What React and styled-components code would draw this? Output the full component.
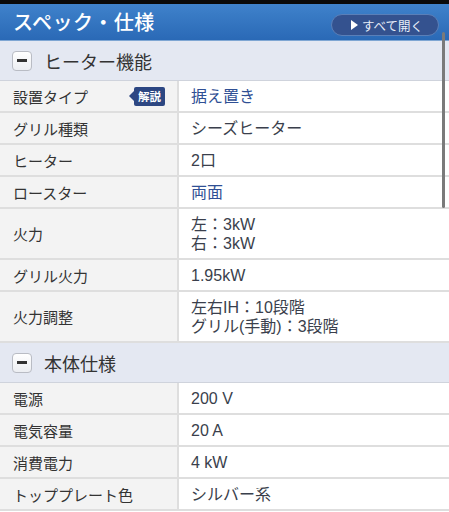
import styled, { createGlobalStyle } from 'styled-components';

const GlobalStyle = createGlobalStyle`
  html, body {
    margin: 0;
    padding: 0;
    background: #ffffff;
  }
  body {
    font-family: "Liberation Sans", "Noto Sans CJK JP", sans-serif;
    width: 449px;
    height: 512px;
    overflow: hidden;
  }
`;

const Page = styled.div`
  position: relative;
  width: 449px;
  height: 512px;
  overflow: hidden;
  border-top: 4px solid #0a0a0a;
  box-sizing: border-box;
`;

const Header = styled.div`
  height: 36px;
  padding: 0 10px 0 13px;
  display: flex;
  align-items: center;
  justify-content: space-between;
  background: linear-gradient(#3f82cb, #2a69b6);
  border-bottom: 1px solid #7fa6d3;
`;

const Title = styled.h1`
  margin: 0;
  color: #ffffff;
  font-family: "Noto Sans CJK JP", sans-serif;
  font-size: 20px;
  font-weight: 500;
  letter-spacing: 0.5px;
  line-height: 1;
`;

const OpenAll = styled.button`
  height: 22px;
  width: 108px;
  padding: 0 0 0 4px;
  border-radius: 11px;
  border: 1px solid #5a7fb8;
  background: #34528f;
  color: #e8eef8;
  font-family: "Noto Sans CJK JP", sans-serif;
  font-size: 12.5px;
  display: flex;
  align-items: center;
  justify-content: center;
  gap: 4px;
  margin-top: 6px;
`;

const Tri = styled.span`
  width: 0;
  height: 0;
  border-top: 5px solid transparent;
  border-bottom: 5px solid transparent;
  border-left: 7px solid #ffffff;
`;

const Section = styled.div`
  height: 39px;
  display: flex;
  align-items: center;
  gap: 12px;
  padding-left: 12px;
  background: #e4e8f2;
  border-bottom: 1px solid #cfd3dc;
  color: #333;
  font-family: "Noto Sans CJK JP", sans-serif;
  font-size: 18px;
`;

const Toggle = styled.span`
  width: 20px;
  height: 20px;
  box-sizing: border-box;
  border: 1px solid #b9bcc4;
  border-radius: 4px;
  background: linear-gradient(#ffffff, #eceef2);
  display: flex;
  align-items: center;
  justify-content: center;

  &::after {
    content: '';
    width: 10px;
    height: 3px;
    background: #333;
  }
`;

const Row = styled.div`
  display: grid;
  grid-template-columns: 179px 1fr;
  min-height: ${(p) => (p.$tall ? 49 : 30)}px;
  border-bottom: 2px solid #dedede;
  font-size: 15px;
`;

const Label = styled.div`
  background: #f3f3f3;
  border-right: 2px solid #dedede;
  padding-left: 13px;
  padding-right: 12px;
  display: flex;
  align-items: center;
  justify-content: space-between;
  color: #333;
`;

const Value = styled.div`
  padding-left: 12px;
  display: flex;
  flex-direction: column;
  justify-content: center;
  color: ${(p) => (p.$link ? '#2f4f94' : '#3a3f4c')};
  font-size: 16px;
  line-height: 19px;
`;

const Badge = styled.span`
  position: relative;
  background: #2d4782;
  color: #ffffff;
  font-family: "Noto Sans CJK JP", sans-serif;
  font-size: 11.5px;
  font-weight: 700;
  padding: 1px 4px;
  border-radius: 2px;
  line-height: 17px;

  &::before {
    content: '';
    position: absolute;
    left: -5px;
    top: 4px;
    border-top: 5px solid transparent;
    border-bottom: 5px solid transparent;
    border-right: 5px solid #2d4782;
  }
`;

const Scrollbar = styled.div`
  position: absolute;
  right: 4px;
  top: 28px;
  width: 3px;
  height: 176px;
  border-radius: 2px;
  background: #7a7a7a;
`;

const heater = [
  { label: '設置タイプ', values: ['据え置き'], link: true, badge: true },
  { label: 'グリル種類', values: ['シーズヒーター'] },
  { label: 'ヒーター', values: ['2口'] },
  { label: 'ロースター', values: ['両面'], link: true },
  { label: '火力', values: ['左：3kW', '右：3kW'] },
  { label: 'グリル火力', values: ['1.95kW'] },
  { label: '火力調整', values: ['左右IH：10段階', 'グリル(手動)：3段階'] },
];

const body = [
  { label: '電源', values: ['200 V'] },
  { label: '電気容量', values: ['20 A'] },
  { label: '消費電力', values: ['4 kW'] },
  { label: 'トッププレート色', values: ['シルバー系'] },
];

function SpecRow({ spec }) {
  return (
    <Row $tall={spec.values.length > 1}>
      <Label>
        <span>{spec.label}</span>
        {spec.badge ? <Badge>解説</Badge> : null}
      </Label>
      <Value $link={spec.link}>
        {spec.values.map((v) => (
          <span key={v}>{v}</span>
        ))}
      </Value>
    </Row>
  );
}

export default function App() {
  return (
    <Page>
      <GlobalStyle />
      <Header>
        <Title>スペック・仕様</Title>
        <OpenAll type="button">
          <Tri />
          すべて開く
        </OpenAll>
      </Header>
      <Section>
        <Toggle />
        ヒーター機能
      </Section>
      {heater.map((s) => <SpecRow key={s.label} spec={s} />)}
      <Section>
        <Toggle />
        本体仕様
      </Section>
      {body.map((s) => <SpecRow key={s.label} spec={s} />)}
      <Scrollbar />
    </Page>
  );
}
